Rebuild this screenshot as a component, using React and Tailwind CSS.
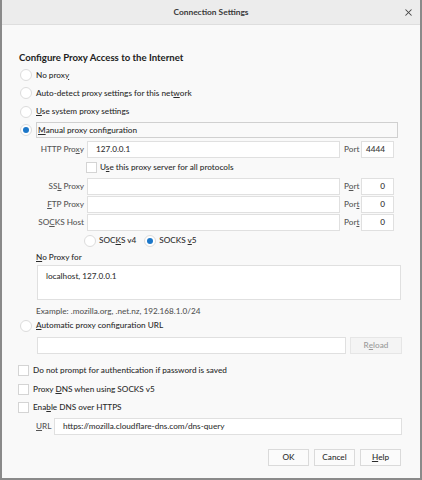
import React from 'react';
import { X } from 'lucide-react';

const font = { fontFamily: 'Lato, "Open Sans", sans-serif' };

function Radio({ checked }) {
  return (
    <span className="flex h-[12px] w-[12px] shrink-0 items-center justify-center rounded-full border border-[#dcdcdc] bg-white">
      {checked && <span className="h-[6px] w-[6px] rounded-full bg-[#1c77c9]" />}
    </span>
  );
}

function Check() {
  return <span className="h-[11px] w-[11px] shrink-0 border border-[#d4d4d4] bg-white" />;
}

function Key({ children }) {
  return <span className="underline underline-offset-[1px]">{children}</span>;
}

function Field({ className = '', children }) {
  return (
    <div className={`flex h-[17px] items-center whitespace-nowrap border border-[#e0e0e0] bg-white px-[8px] text-[#333] ${className}`}>
      {children}
    </div>
  );
}

function ProxyRow({ label, value = '', port }) {
  return (
    <div className="-ml-[10px] flex h-[18px] items-center">
      <span className="w-[58px] shrink-0 whitespace-nowrap text-right text-[#555]">{label}</span>
      <Field className="ml-[3px] w-[253px]">{value}</Field>
      <span className="ml-[4px] w-[17px] whitespace-nowrap text-[#555]">{port.label}</span>
      <Field className="w-[33px] justify-end">{port.value}</Field>
    </div>
  );
}

export default function App() {
  return (
    <div
      className="flex h-[480px] w-[422px] flex-col border-x-2 border-b-2 border-[#8a8a8a] bg-[#f9f9f9] text-[8.2px] font-medium text-[#2b2b2b]"
      style={font}
    >
      <div className="relative flex h-[25px] shrink-0 items-center justify-center border-b border-[#dedede] bg-[#ececec]">
        <span className="text-[8.4px] font-bold text-[#3a3a3a]">Connection Settings</span>
        <X size={11} strokeWidth={2.2} className="absolute right-[6px] top-[7px] text-[#444]" />
      </div>

      <div className="flex flex-col pl-[14px]">
        <div className="mt-[25px] flex h-[16px] items-center pl-[3px] text-[9.6px] font-bold text-[#222]">
          Configure Proxy Access to the Internet
        </div>

        <div className="flex h-[18px] items-center gap-[4px] pl-[4px]">
          <Radio />
          <span>No prox<Key>y</Key></span>
        </div>
        <div className="flex h-[18px] items-center gap-[4px] pl-[4px]">
          <Radio />
          <span>Auto-detect proxy settings for this net<Key>w</Key>ork</span>
        </div>
        <div className="flex h-[19px] items-center gap-[4px] pl-[4px]">
          <Radio />
          <span><Key>U</Key>se system proxy settings</span>
        </div>
        <div className="flex h-[18px] items-center gap-[4px] pl-[4px]">
          <Radio checked />
          <span className="flex h-[16px] w-[362px] items-center border border-[#d0d0d0] pl-[1px]">
            <Key>M</Key>anual proxy configuration
          </span>
        </div>

        <div className="mt-[1px] flex flex-col pl-[20px]">
          <ProxyRow label={<>HTTP Pro<Key>x</Key>y</>} value="127.0.0.1" port={{ label: 'Port', value: '4444' }} />
          <div className="flex h-[19px] items-center gap-[3px] pl-[50px]">
            <Check />
            <span>U<Key>s</Key>e this proxy server for all protocols</span>
          </div>
          <ProxyRow label={<>SS<Key>L</Key> Proxy</>} port={{ label: <>P<Key>o</Key>rt</>, value: '0' }} />
          <ProxyRow label={<><Key>F</Key>TP Proxy</>} port={{ label: <>Por<Key>t</Key></>, value: '0' }} />
          <ProxyRow label={<>SO<Key>C</Key>KS Host</>} port={{ label: <>Por<Key>t</Key></>, value: '0' }} />
          <div className="flex h-[19px] items-center pl-[48px]">
            <Radio />
            <span className="ml-[3px]">SOC<Key>K</Key>S v4</span>
            <span className="ml-[8px]"><Radio checked /></span>
            <span className="ml-[3px]">SOCKS <Key>v</Key>5</span>
          </div>
          <div className="flex h-[15px] items-center">
            <span><Key>N</Key>o Proxy for</span>
          </div>
          <div className="ml-[1px] h-[35px] w-[364px] border border-[#e0e0e0] bg-white px-[8px] pt-[4px] text-[#333]">
            localhost, 127.0.0.1
          </div>
          <div className="mt-[4px] flex h-[14px] items-center text-[#555]">
            Example: .mozilla.org, .net.nz, 192.168.1.0/24
          </div>
        </div>

        <div className="flex h-[15px] items-center gap-[4px] pl-[4px]">
          <Radio />
          <span><Key>A</Key>utomatic proxy configuration URL</span>
        </div>
        <div className="mt-[4px] flex items-center pl-[21px]">
          <Field className="w-[309px]">{'\u00a0'}</Field>
          <button className="ml-[4px] flex h-[17px] w-[52px] items-center justify-center border border-[#e6e6e6] bg-[#f4f4f4] text-[#9a9a9a]">
            R<Key>e</Key>load
          </button>
        </div>

        <div className="mt-[7px] flex h-[19px] items-center gap-[4px] pl-[2px]">
          <Check />
          <span>Do not prompt for authent<Key>i</Key>cation if password is saved</span>
        </div>
        <div className="flex h-[18px] items-center gap-[4px] pl-[2px]">
          <Check />
          <span>Proxy <Key>D</Key>NS when using SOCKS v5</span>
        </div>
        <div className="flex h-[19px] items-center gap-[4px] pl-[2px]">
          <Check />
          <span>Ena<Key>b</Key>le DNS over HTTPS</span>
        </div>
        <div className="flex h-[18px] items-center pl-[20px]">
          <span className="w-[18px] text-[#555]"><Key>U</Key>RL</span>
          <Field className="w-[348px] bg-[#fcfcfc] text-[#8a8a8a]">https://mozilla.cloudflare-dns.com/dns-query</Field>
        </div>

        <div className="mt-[14px] flex justify-end gap-[5px] pr-[19px]">
          <button className="flex h-[17px] w-[41px] items-center justify-center border border-[#dadada] bg-[#fbfbfb]">OK</button>
          <button className="flex h-[17px] w-[41px] items-center justify-center border border-[#dadada] bg-[#fbfbfb]">Cancel</button>
          <button className="flex h-[17px] w-[41px] items-center justify-center border border-[#dadada] bg-[#fbfbfb]">
            <Key>H</Key>elp
          </button>
        </div>
      </div>
    </div>
  );
}
